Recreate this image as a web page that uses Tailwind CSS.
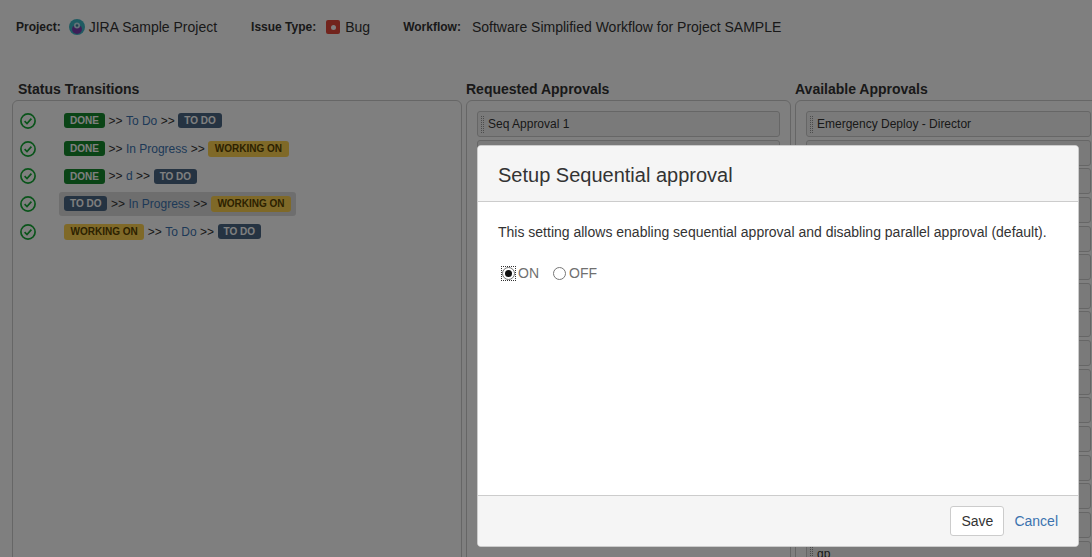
<!DOCTYPE html>
<html lang="en">
<head>
<meta charset="UTF-8">
<title>Setup Sequential approval</title>
<script src="https://cdn.jsdelivr.net/npm/@tailwindcss/browser@4"></script>
</head>
<body class="bg-white font-['Liberation_Sans',Arial,sans-serif] text-[#333]">
<div class="relative h-[557px] w-[1092px] overflow-hidden">

  <!-- page behind the dialog -->
  <div class="flex h-[40px] items-center pl-[16px] pt-[14px] text-[14px]">
    <span class="text-[12px] font-bold">Project:</span>
    <svg class="ml-[8px] mr-[4px]" width="16" height="16" viewBox="0 0 16 16"><circle cx="8" cy="8" r="8" fill="#3fb6c4"/><path d="M3 10a5 4 0 0 1 10 0a5 5 0 0 1-10 0z" fill="#7b3fb0"/><circle cx="8" cy="6.5" r="3" fill="#c8e6f0"/><circle cx="8" cy="6.5" r="1.3" fill="#3a7f9c"/></svg>
    <span>JIRA Sample Project</span>
    <span class="ml-[34px] text-[12px] font-bold">Issue Type:</span>
    <span class="ml-[10px] mr-[5px] flex h-[14px] w-[14px] items-center justify-center rounded-[2px] bg-[#e5493a]"><span class="h-[5px] w-[5px] rounded-full bg-white"></span></span>
    <span>Bug</span>
    <span class="ml-[33px] text-[12px] font-bold">Workflow:</span>
    <span class="ml-[11px]">Software Simplified Workflow for Project SAMPLE</span>
  </div>

  <div class="mt-[40px] flex pl-[12px]">
    <section class="w-[450px] shrink-0">
      <h2 class="h-[20px] pl-[6px] text-[14px] leading-[19px] font-bold">Status Transitions</h2>
      <div class="h-[500px] rounded-t-[6px] border border-[#ccc] pt-[6px] text-[12px]">
        <div class="flex h-[27.7px] items-center">
          <svg class="ml-[7px] mr-[28px]" width="16" height="16" viewBox="0 0 16 16" fill="none" stroke="#14a835" stroke-width="1.7"><circle cx="8" cy="8" r="7.1"/><path d="M4.6 8.2l2.4 2.4 4.4-5"/></svg>
          <span class="rounded-[3px] bg-[#14892c] px-[6px] text-[10px] leading-[15px] font-bold text-white">DONE</span>
          <span class="mx-[3.5px]">&gt;&gt;</span><a class="text-[#3b73af]">To Do</a><span class="mx-[3.5px]">&gt;&gt;</span>
          <span class="rounded-[3px] bg-[#4a6785] px-[6px] text-[10px] leading-[15px] font-bold text-white">TO DO</span>
        </div>
        <div class="flex h-[27.7px] items-center">
          <svg class="ml-[7px] mr-[28px]" width="16" height="16" viewBox="0 0 16 16" fill="none" stroke="#14a835" stroke-width="1.7"><circle cx="8" cy="8" r="7.1"/><path d="M4.6 8.2l2.4 2.4 4.4-5"/></svg>
          <span class="rounded-[3px] bg-[#14892c] px-[6px] text-[10px] leading-[15px] font-bold text-white">DONE</span>
          <span class="mx-[3.5px]">&gt;&gt;</span><a class="text-[#3b73af]">In Progress</a><span class="mx-[3.5px]">&gt;&gt;</span>
          <span class="rounded-[3px] bg-[#ffd351] px-[6.5px] text-[10px] leading-[16px] font-bold text-[#594300]">WORKING ON</span>
        </div>
        <div class="flex h-[27.7px] items-center">
          <svg class="ml-[7px] mr-[28px]" width="16" height="16" viewBox="0 0 16 16" fill="none" stroke="#14a835" stroke-width="1.7"><circle cx="8" cy="8" r="7.1"/><path d="M4.6 8.2l2.4 2.4 4.4-5"/></svg>
          <span class="rounded-[3px] bg-[#14892c] px-[6px] text-[10px] leading-[15px] font-bold text-white">DONE</span>
          <span class="mx-[3.5px]">&gt;&gt;</span><a class="text-[#3b73af]">d</a><span class="mx-[3.5px]">&gt;&gt;</span>
          <span class="rounded-[3px] bg-[#4a6785] px-[6px] text-[10px] leading-[15px] font-bold text-white">TO DO</span>
        </div>
        <div class="flex h-[27.7px] items-center">
          <svg class="ml-[7px] mr-[23px]" width="16" height="16" viewBox="0 0 16 16" fill="none" stroke="#14a835" stroke-width="1.7"><circle cx="8" cy="8" r="7.1"/><path d="M4.6 8.2l2.4 2.4 4.4-5"/></svg>
          <div class="flex h-[24px] items-center rounded-[3px] bg-[#dddddd] px-[5px]">
            <span class="rounded-[3px] bg-[#4a6785] px-[6px] text-[10px] leading-[15px] font-bold text-white">TO DO</span>
            <span class="mx-[3.5px]">&gt;&gt;</span><a class="text-[#3b73af]">In Progress</a><span class="mx-[3.5px]">&gt;&gt;</span>
            <span class="rounded-[3px] bg-[#ffd351] px-[6.5px] text-[10px] leading-[16px] font-bold text-[#594300]">WORKING ON</span>
          </div>
        </div>
        <div class="flex h-[27.7px] items-center">
          <svg class="ml-[7px] mr-[28px]" width="16" height="16" viewBox="0 0 16 16" fill="none" stroke="#14a835" stroke-width="1.7"><circle cx="8" cy="8" r="7.1"/><path d="M4.6 8.2l2.4 2.4 4.4-5"/></svg>
          <span class="rounded-[3px] bg-[#ffd351] px-[6.5px] text-[10px] leading-[16px] font-bold text-[#594300]">WORKING ON</span>
          <span class="mx-[3.5px]">&gt;&gt;</span><a class="text-[#3b73af]">To Do</a><span class="mx-[3.5px]">&gt;&gt;</span>
          <span class="rounded-[3px] bg-[#4a6785] px-[6px] text-[10px] leading-[15px] font-bold text-white">TO DO</span>
        </div>
      </div>
    </section>

    <section class="ml-[4px] w-[325px] shrink-0">
      <h2 class="h-[20px] text-[14px] leading-[19px] font-bold">Requested Approvals</h2>
      <div class="flex h-[500px] flex-col gap-[2.65px] rounded-t-[6px] border border-[#ccc] pt-[10px] pl-[10px] pr-[10px] text-[12px]">
        <div class="flex h-[26px] items-center rounded-[3px] border border-[#ccc] bg-[#f5f5f5] pl-[3px]"><span class="mr-[4px] h-[17px] w-[3px] border-x border-dotted border-[#999]"></span>Seq Approval 1</div>
        <div class="h-[26px] rounded-[3px] border border-[#ccc] bg-[#f5f5f5]"></div>
      </div>
    </section>

    <section class="ml-[4px] w-[307px] shrink-0">
      <h2 class="h-[20px] text-[14px] leading-[19px] font-bold">Available Approvals</h2>
      <div class="flex h-[500px] flex-col gap-[2.65px] rounded-t-[6px] border border-[#ccc] pt-[10px] pl-[10px] pr-[10px] text-[12px]">
        <div class="flex h-[26px] shrink-0 items-center rounded-[3px] border border-[#ccc] bg-[#f5f5f5] pl-[3px]"><span class="mr-[4px] h-[17px] w-[3px] border-x border-dotted border-[#999]"></span>Emergency Deploy - Director</div>
        <div class="h-[26px] shrink-0 rounded-[3px] border border-[#ccc] bg-[#f5f5f5]"></div>
        <div class="h-[26px] shrink-0 rounded-[3px] border border-[#ccc] bg-[#f5f5f5]"></div>
        <div class="h-[26px] shrink-0 rounded-[3px] border border-[#ccc] bg-[#f5f5f5]"></div>
        <div class="h-[26px] shrink-0 rounded-[3px] border border-[#ccc] bg-[#f5f5f5]"></div>
        <div class="h-[26px] shrink-0 rounded-[3px] border border-[#ccc] bg-[#f5f5f5]"></div>
        <div class="h-[26px] shrink-0 rounded-[3px] border border-[#ccc] bg-[#f5f5f5]"></div>
        <div class="h-[26px] shrink-0 rounded-[3px] border border-[#ccc] bg-[#f5f5f5]"></div>
        <div class="h-[26px] shrink-0 rounded-[3px] border border-[#ccc] bg-[#f5f5f5]"></div>
        <div class="h-[26px] shrink-0 rounded-[3px] border border-[#ccc] bg-[#f5f5f5]"></div>
        <div class="h-[26px] shrink-0 rounded-[3px] border border-[#ccc] bg-[#f5f5f5]"></div>
        <div class="h-[26px] shrink-0 rounded-[3px] border border-[#ccc] bg-[#f5f5f5]"></div>
        <div class="h-[26px] shrink-0 rounded-[3px] border border-[#ccc] bg-[#f5f5f5]"></div>
        <div class="h-[26px] shrink-0 rounded-[3px] border border-[#ccc] bg-[#f5f5f5]"></div>
        <div class="h-[26px] shrink-0 rounded-[3px] border border-[#ccc] bg-[#f5f5f5]"></div>
        <div class="flex h-[26px] shrink-0 items-center rounded-[3px] border border-[#ccc] bg-[#f5f5f5] pl-[3px]"><span class="mr-[4px] h-[17px] w-[3px] border-x border-dotted border-[#999]"></span>gp</div>
      </div>
    </section>
  </div>

  <!-- dim layer -->
  <div class="absolute inset-0 bg-black/50"></div>

  <!-- dialog -->
  <div class="absolute left-[477px] top-[145px] flex h-[402px] w-[602px] flex-col overflow-hidden rounded-[4px] border border-[#ccc] bg-white">
    <div class="flex h-[56px] items-center border-b border-[#ccc] bg-[#f5f5f5] pl-[20px] pt-[2px] text-[20px] text-[#333]">Setup Sequential approval</div>
    <div class="flex-1 px-[20px] pt-[20px] text-[14px] text-[#333]">
      <p class="leading-[20px]">This setting allows enabling sequential approval and disabling parallel approval (default).</p>
      <div class="mt-[21px] flex h-[20px] items-center pl-[4px] text-[#707070]">
        <span class="flex h-[13px] w-[13px] items-center justify-center outline-1 outline-dotted outline-[#333]"><span class="flex h-[13px] w-[13px] items-center justify-center rounded-full border border-[#767676]"><span class="h-[7px] w-[7px] rounded-full bg-[#111]"></span></span></span>
        <span class="ml-[3px]">ON</span>
        <span class="ml-[14px] h-[13px] w-[13px] rounded-full border border-[#767676]"></span>
        <span class="ml-[3px]">OFF</span>
      </div>
    </div>
    <div class="flex h-[51px] items-center justify-end border-t border-[#ccc] bg-[#f5f5f5] pr-[20px] text-[14px]">
      <button class="h-[30px] w-[54px] rounded-[3px] border border-[#ccc] bg-white text-[#333]">Save</button>
      <a class="ml-[10px] text-[#3b73af]">Cancel</a>
    </div>
  </div>
</div>
</body>
</html>
